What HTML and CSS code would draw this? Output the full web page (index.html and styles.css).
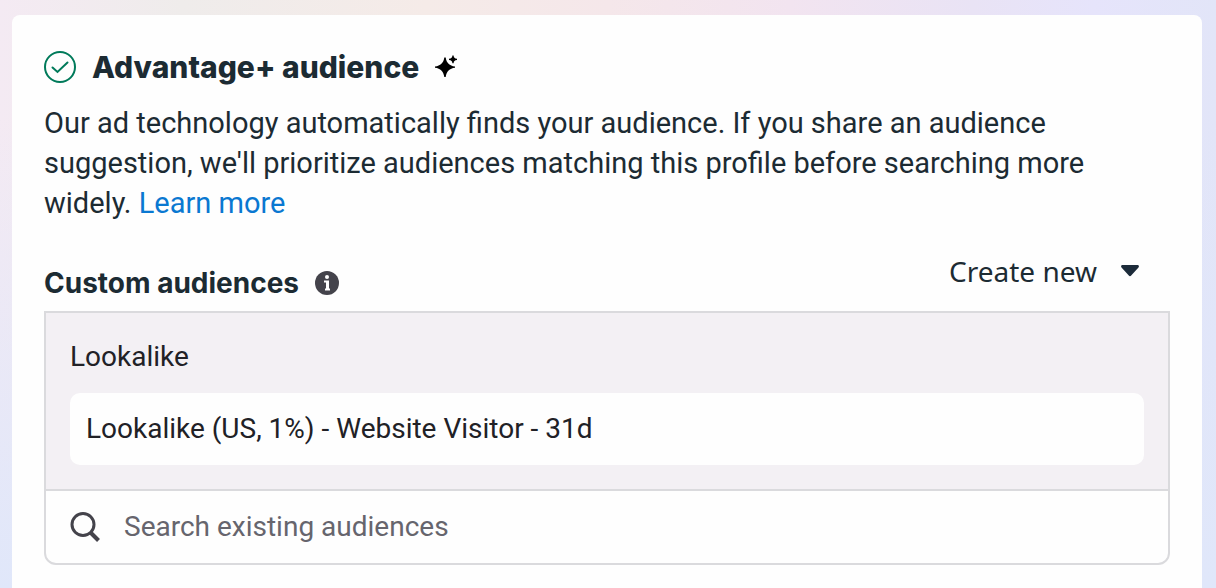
FILE: index.html
```
<!DOCTYPE html>
<html lang="en">
<head>
    <meta charset="UTF-8">
    <meta name="viewport" content="width=device-width, initial-scale=1.0">
    <title>Advantage+ audience</title>
    <link rel="stylesheet" href="styles.css">
</head>
<body>
    <main class="card">
        <div class="title-row">
            <svg class="check-icon" viewBox="0 0 32 32" aria-hidden="true">
                <circle cx="16" cy="16" r="15"/>
                <path d="M8.500 16.500l5 4.500 10-9.500"/>
            </svg>
            <h2>Advantage+ audience</h2>
            <svg class="sparkle-icon" viewBox="0 0 24 24" aria-hidden="true">
                <path d="M9.300 2.500h1.400c.8 5.500 3.800 8.300 9.300 9v1.300c-5.500.7-8.500 3.600-9.300 9.200H9.300C8.500 16.400 5.500 13.500 0 12.800v-1.300c5.500-.7 8.500-3.500 9.300-9z"/>
                <path d="M17.400.5h1.200c.2 2.200 1 2.900 3.400 3.200v1.200c-2.400.3-3.200 1-3.400 3.300h-1.200c-.2-2.300-1-3-3.400-3.300V3.700c2.400-.3 3.200-1 3.400-3.200z"/>
            </svg>
        </div>
        <p class="description">Our ad technology automatically finds your audience. If you share an audience suggestion, we'll prioritize audiences matching this profile before searching more widely. <a href="#">Learn more</a></p>

        <div class="field-header">
            <label for="audienceSearch">Custom audiences
                <svg class="info-icon" viewBox="0 0 24 24" aria-hidden="true">
                    <circle cx="12" cy="12" r="12"/>
                    <circle class="mark" cx="12" cy="6" r="2"/>
                    <path class="mark" d="M9 9.500h5v8h1v2H10v-2h1v-6H9z"/>
                </svg>
            </label>
            <button type="button" class="create-button">Create new
                <svg class="caret-icon" viewBox="0 0 18 12" aria-hidden="true">
                    <path d="M1.500 0h15c1.300 0 1.900 1.400 1 2.400l-7.300 8.200c-.7.800-1.700.8-2.400 0L.5 2.400C-.4 1.400.2 0 1.500 0z"/>
                </svg>
            </button>
        </div>

        <div class="audience-box">
            <div class="audience-group">
                <div class="group-name">Lookalike</div>
                <div class="audience-item">Lookalike (US, 1%) - Website Visitor - 31d</div>
            </div>
            <div class="search-row">
                <svg class="search-icon" viewBox="0 0 30 30" aria-hidden="true">
                    <circle cx="13" cy="12.500" r="11"/>
                    <path class="handle" d="M20.500 20.500l8 8"/>
                </svg>
                <input type="text" id="audienceSearch" placeholder="Search existing audiences">
            </div>
        </div>
    </main>
</body>
</html>
```
FILE: styles.css
```
* {
    box-sizing: border-box;
}
body {
    margin: 0;
    padding: 15px 14px 0 12px;
    min-height: 100vh;
    display: flex;
    font-family: Roboto, sans-serif;
    font-size: 28px;
    line-height: 40px;
    color: #1c2b33;
    background: linear-gradient(to bottom, rgba(224, 231, 250, 0) 20%, #e0e7fa), linear-gradient(to right, #f4eaf3, #efeceb 15%, #f5ebe8 35%, #f5e7ea 50%, #f2e4f0 65%, #e9e3f5 80%, #e6e4fb 90%, #e2e5f8);
}
.card {
    flex: 1;
    padding: 32px 32px 24px;
    background-color: #fefefe;
    border-radius: 8px 8px 0 0;
}
.title-row {
    display: flex;
    align-items: center;
    gap: 16px;
}
h2 {
    margin: 0;
    font-family: Inter, sans-serif;
    font-size: 30px;
    font-weight: 800;
    line-height: 40px;
}
.check-icon {
    width: 32px;
    height: 32px;
    fill: none;
    stroke: #007a5a;
    stroke-width: 2;
    stroke-linecap: round;
}
.sparkle-icon {
    width: 24px;
    height: 24px;
    fill: #000;
}
.description {
    margin: 16px 32px 28px 0;
    font-size: 29px;
}
.description a {
    color: #0a78d1;
    text-decoration: none;
}
.field-header {
    display: flex;
    justify-content: space-between;
    height: 60px;
}
label {
    display: flex;
    align-items: center;
    align-self: flex-end;
    gap: 16px;
    margin-bottom: 8px;
    font-family: Inter, sans-serif;
    font-weight: 700;
}
.info-icon {
    width: 24px;
    height: 24px;
    fill: #44434b;
}
.info-icon .mark {
    fill: #fff;
}
.create-button {
    display: flex;
    align-items: center;
    align-self: flex-start;
    gap: 24px;
    padding: 0 31px;
    border: none;
    background: none;
    font-family: "Noto Sans", sans-serif;
    font-size: 28px;
    line-height: 40px;
    color: #1c2b33;
    cursor: pointer;
}
.caret-icon {
    width: 18px;
    height: 12px;
    fill: #1c2b3a;
}
.audience-box {
    border: 2px solid #dadadd;
    border-radius: 0 0 12px 12px;
    color: #212126;
}
.audience-group {
    padding: 24px;
    background-color: #f3f0f4;
    border-bottom: 2px solid #dadadd;
}
.audience-item {
    margin-top: 16px;
    padding: 16px;
    background-color: #fefefe;
    border-radius: 10px;
}
.search-row {
    display: flex;
    align-items: center;
    gap: 24px;
    padding: 16px 24px;
}
.search-icon {
    width: 30px;
    height: 30px;
    fill: none;
    stroke: #44434b;
    stroke-width: 3;
}
.search-icon .handle {
    stroke-width: 4;
}
.search-row input {
    flex: 1;
    height: 40px;
    padding: 0;
    border: none;
    outline: none;
    background: none;
    font: inherit;
    color: #212126;
}
.search-row input::placeholder {
    color: #66656d;
    opacity: 1;
}
```
